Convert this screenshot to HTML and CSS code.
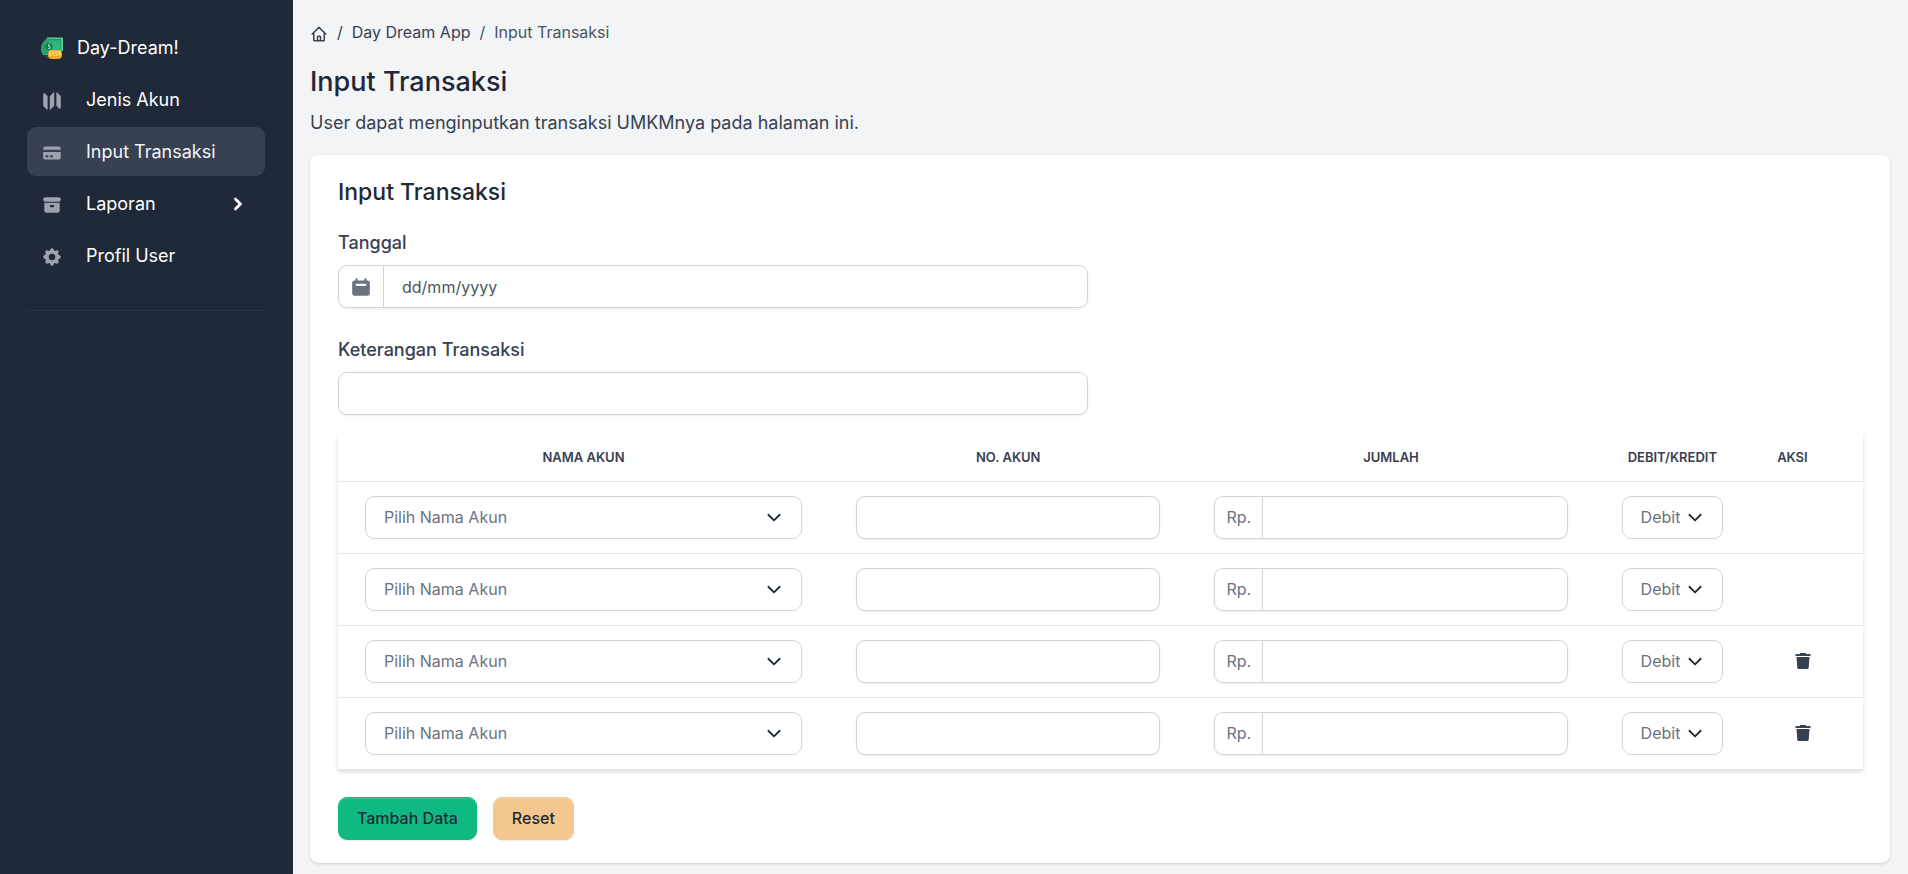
FILE: index.html
```html
<!DOCTYPE html>
<html lang="id">
<head>
<meta charset="utf-8">
<title>Input Transaksi</title>
<link rel="stylesheet" href="styles.css">
</head>
<body>
<svg class="sprite" aria-hidden="true">
  <symbol id="trash" viewBox="0 0 16 16"><path d="M5 0h6v1h4a.5.500 0 0 1 .5.500V3H.5V1.500A.5.500 0 0 1 1 1h4zM1.500 4h13l-.8 10.700a1.400 1.400 0 0 1-1.400 1.300H3.700a1.400 1.400 0 0 1-1.400-1.300z"/></symbol>
</svg>
<div class="layout">
  <nav class="sidebar" aria-label="Menu">
    <ul class="menu">
      <li><a class="brand" href="#">
        <svg class="logo" viewBox="0 0 22 22" aria-hidden="true">
          <circle cx="11" cy="11" r="11" fill="#40396e"/>
          <path d="M6 .5h16V14h-4V4H5z" fill="#4cc98f"/>
          <path d="M6 2h14v11h-2V4H5z" fill="#239a63"/>
          <path d="M4 3.500h15V18H2A11 11 0 0 1 4 3.500z" fill="#32b57a"/>
          <path d="M4 3.500A11 11 0 0 0 1.500 17H8V4z" fill="#25a068"/>
          <circle cx="8" cy="9.500" r="3.500" fill="#17784b"/>
          <path d="M9 7.500H7.500v2H9v2H7" fill="none" stroke="#8be3b6" stroke-width="1"/>
          <rect x="7" y="13" width="14" height="9" rx="4" fill="#f6a821"/>
          <rect x="8" y="14" width="12" height="5" rx="2" fill="#ffd66b"/>
          <path d="M10 15l2 4M13 15l2 4M16 15l2 4" stroke="#f09a1a" stroke-width="1"/>
        </svg>
        <span>Day-Dream!</span></a></li>
      <li><a class="item" href="#">
        <svg class="icon" viewBox="0 0 20 20" aria-hidden="true"><path d="M12 1.586l-4 4v12.828l4-4V1.586zM3.707 3.293A1 1 0 002 4v10a1 1 0 00.293.707L6 18.414V5.586L3.707 3.293zM17.707 5.293L14 1.586v12.828l2.293 2.293A1 1 0 0018 16V6a1 1 0 00-.293-.707z"/></svg>
        <span>Jenis Akun</span></a></li>
      <li><a class="item item-active" href="#" aria-current="page">
        <svg class="icon" viewBox="0 0 20 20" aria-hidden="true"><path fill-rule="evenodd" d="M4 4a2 2 0 00-2 2v1h16V6a2 2 0 00-2-2H4zM18 9H2v5a2 2 0 002 2h12a2 2 0 002-2V9zM4 13a1 1 0 011-1h1a1 1 0 110 2H5a1 1 0 01-1-1zm5-1a1 1 0 100 2h1a1 1 0 100-2H9z"/></svg>
        <span>Input Transaksi</span></a></li>
      <li><a class="item" href="#">
        <svg class="icon" viewBox="0 0 20 20" aria-hidden="true"><path d="M4 3a2 2 0 100 4h12a2 2 0 100-4H4z"/><path fill-rule="evenodd" d="M3 8h14v7a2 2 0 01-2 2H5a2 2 0 01-2-2V8zm5 3a1 1 0 011-1h2a1 1 0 110 2H9a1 1 0 01-1-1z"/></svg>
        <span>Laporan</span>
        <svg class="arrow" viewBox="0 0 20 20" aria-hidden="true"><path fill-rule="evenodd" d="M7.293 14.707a1 1 0 010-1.414L10.586 10 7.293 6.707a1 1 0 011.414-1.414l4 4a1 1 0 010 1.414l-4 4a1 1 0 01-1.414 0z"/></svg></a></li>
      <li><a class="item" href="#">
        <svg class="icon" viewBox="0 0 20 20" aria-hidden="true"><path fill-rule="evenodd" d="M11.490 3.170c-.38-1.560-2.600-1.560-2.980 0a1.532 1.532 0 01-2.286.948c-1.372-.836-2.942.734-2.106 2.106.540.886.061 2.042-.947 2.287-1.561.379-1.561 2.600 0 2.978a1.532 1.532 0 01.947 2.287c-.836 1.372.734 2.942 2.106 2.106a1.532 1.532 0 012.287.947c.379 1.561 2.600 1.561 2.978 0a1.533 1.533 0 012.287-.947c1.372.836 2.942-.734 2.106-2.106a1.533 1.533 0 01.947-2.287c1.561-.379 1.561-2.600 0-2.978a1.532 1.532 0 01-.947-2.287c.836-1.372-.734-2.942-2.106-2.106a1.532 1.532 0 01-2.287-.947zM10 13a3 3 0 100-6 3 3 0 000 6z"/></svg>
        <span>Profil User</span></a></li>
    </ul>
    <hr class="divider">
  </nav>

  <main class="content">
    <nav aria-label="breadcrumb">
      <ol class="crumbs">
        <li><a href="#" aria-label="Beranda"><svg class="home" viewBox="0 0 24 24" aria-hidden="true"><path d="M3 12l2-2m0 0l7-7 7 7M5 10v10a1 1 0 001 1h3m10-11l2 2m-2-2v10a1 1 0 01-1 1h-3m-6 0a1 1 0 001-1v-4a1 1 0 011-1h2a1 1 0 011 1v4a1 1 0 001 1m-6 0h6"/></svg></a></li>
        <li><a href="#">Day Dream App</a></li>
        <li class="current" aria-current="page">Input Transaksi</li>
      </ol>
    </nav>
    <h1 class="title">Input Transaksi</h1>
    <p class="lead">User dapat menginputkan transaksi UMKMnya pada halaman ini.</p>

    <form class="card">
      <h2 class="card-title">Input Transaksi</h2>
      <div class="field">
        <label for="tanggal">Tanggal</label>
        <div class="group">
          <span class="addon addon-date"><svg class="calendar" viewBox="0 0 20 20" aria-hidden="true"><path fill-rule="evenodd" d="M6 2a1 1 0 00-1 1v1H4a2 2 0 00-2 2v10a2 2 0 002 2h12a2 2 0 002-2V6a2 2 0 00-2-2h-1V3a1 1 0 10-2 0v1H7V3a1 1 0 00-1-1zm0 5a1 1 0 000 2h8a1 1 0 100-2H6z"/></svg></span>
          <input class="control" id="tanggal" type="text" placeholder="dd/mm/yyyy">
        </div>
      </div>
      <div class="field field-last">
        <label for="keterangan">Keterangan Transaksi</label>
        <input class="control" id="keterangan" type="text">
      </div>

      <table class="entries">
        <colgroup><col class="c-name"><col class="c-number"><col class="c-amount"><col class="c-side"><col class="c-action"></colgroup>
        <thead>
          <tr><th scope="col">Nama Akun</th><th scope="col">No. Akun</th><th scope="col">Jumlah</th><th scope="col">Debit/Kredit</th><th scope="col" class="action">Aksi</th></tr>
        </thead>
        <tbody>
          <tr>
            <td><select class="control select" aria-label="Nama akun 1"><option>Pilih Nama Akun</option></select></td>
            <td><input class="control" type="text" aria-label="No. akun 1"></td>
            <td><div class="group"><label class="addon" for="jumlah1">Rp.</label><input class="control" id="jumlah1" type="text"></div></td>
            <td><select class="control select" aria-label="Debit/kredit 1"><option>Debit</option><option>Kredit</option></select></td>
            <td></td>
          </tr>
          <tr>
            <td><select class="control select" aria-label="Nama akun 2"><option>Pilih Nama Akun</option></select></td>
            <td><input class="control" type="text" aria-label="No. akun 2"></td>
            <td><div class="group"><label class="addon" for="jumlah2">Rp.</label><input class="control" id="jumlah2" type="text"></div></td>
            <td><select class="control select" aria-label="Debit/kredit 2"><option>Debit</option><option>Kredit</option></select></td>
            <td></td>
          </tr>
          <tr>
            <td><select class="control select" aria-label="Nama akun 3"><option>Pilih Nama Akun</option></select></td>
            <td><input class="control" type="text" aria-label="No. akun 3"></td>
            <td><div class="group"><label class="addon" for="jumlah3">Rp.</label><input class="control" id="jumlah3" type="text"></div></td>
            <td><select class="control select" aria-label="Debit/kredit 3"><option>Debit</option><option>Kredit</option></select></td>
            <td><button class="remove" type="button" aria-label="Hapus baris 3"><svg aria-hidden="true"><use href="#trash"/></svg></button></td>
          </tr>
          <tr>
            <td><select class="control select" aria-label="Nama akun 4"><option>Pilih Nama Akun</option></select></td>
            <td><input class="control" type="text" aria-label="No. akun 4"></td>
            <td><div class="group"><label class="addon" for="jumlah4">Rp.</label><input class="control" id="jumlah4" type="text"></div></td>
            <td><select class="control select" aria-label="Debit/kredit 4"><option>Debit</option><option>Kredit</option></select></td>
            <td><button class="remove" type="button" aria-label="Hapus baris 4"><svg aria-hidden="true"><use href="#trash"/></svg></button></td>
          </tr>
        </tbody>
      </table>

      <div class="actions">
        <button class="btn btn-add" type="button">Tambah Data</button>
        <button class="btn btn-reset" type="reset">Reset</button>
      </div>
    </form>
  </main>
</div>
</body>
</html>
```

FILE: styles.css
```css
* {
  box-sizing: border-box;
}

body {
  margin: 0;
  background: #f2f4f6;
  color: #374151;
  font: 18px/27px Inter, "Liberation Sans", sans-serif;
}

a {
  color: inherit;
  text-decoration: none;
}

h1, h2, p, ul, ol {
  margin: 0;
  padding: 0;
}

ul, ol {
  list-style: none;
}

.sprite {
  display: none;
}

.layout {
  display: flex;
  min-height: 100vh;
}

/* Sidebar */
.sidebar {
  flex: 0 0 293px;
  padding: 23px 28px 0 27px;
  background: #1f2937;
  color: #fff;
}

.menu {
  display: flex;
  flex-direction: column;
  gap: 3px;
}

.brand,
.item {
  display: flex;
  align-items: center;
  height: 49px;
  padding: 0 15px 0 14px;
  border-radius: 9px;
}

.brand {
  gap: 14px;
}

.item {
  gap: 23px;
}

.item-active {
  background: #374151;
  color: #f2f4f6;
}

.logo {
  width: 22px;
  height: 22px;
}

.icon {
  width: 22px;
  height: 22px;
  margin-top: 2px;
  fill: #9ca3af;
}

.arrow {
  width: 24px;
  height: 24px;
  margin-left: auto;
  fill: #fff;
  stroke: #fff;
  stroke-width: 0.6;
}

.divider {
  margin: 30px 0 0;
  border: 0;
  border-top: 1px solid #2b3543;
}

/* Page header */
.content {
  flex: 1;
  min-width: 0;
  padding: 20px 18px 13px 17px;
}

.crumbs {
  display: flex;
  font-size: 16px;
  line-height: 24px;
}

.crumbs li + li::before {
  content: "/";
  padding: 0 9px;
}

.current {
  color: #4b5563;
}

.home {
  display: block;
  width: 18px;
  height: 18px;
  margin-top: 5px;
  fill: none;
  stroke: currentColor;
  stroke-width: 2;
  stroke-linecap: round;
  stroke-linejoin: round;
}

.title {
  margin-top: 20px;
  color: #1f2937;
  font-size: 27px;
  font-weight: 500;
  line-height: 36px;
}

.lead {
  margin: 9px 0 19px;
}

/* Form card */
.card {
  padding: 22px 27px 23px 28px;
  border-radius: 9px;
  background: #fff;
  box-shadow: 0 1px 3px rgba(17, 24, 39, 0.16);
}

.card-title {
  margin-bottom: 22px;
  color: #1f2937;
  font-size: 23px;
  font-weight: 500;
  line-height: 30px;
}

.field {
  width: calc(50% - 13px);
  margin-bottom: 28px;
}

.field label {
  display: block;
  margin-bottom: 9px;
  font-weight: 500;
}

.field-last {
  margin-bottom: 18px;
}

.control {
  display: block;
  width: 100%;
  height: 43px;
  padding: 0 18px;
  border: 1px solid #d1d5db;
  border-radius: 9px;
  background: #fff;
  box-shadow: 0 1px 2px rgba(17, 24, 39, 0.08);
  color: #6b7280;
  font: inherit;
  font-size: 16px;
}

.control::placeholder {
  color: #4b5563;
  opacity: 1;
}

.select {
  appearance: none;
  background: #fff url("data:image/svg+xml,%3Csvg xmlns='http://www.w3.org/2000/svg' viewBox='0 0 16 16'%3E%3Cpath fill='none' stroke='%231f2937' stroke-linecap='round' stroke-linejoin='round' stroke-width='1.6' d='M3 6l5 5 5-5'/%3E%3C/svg%3E") no-repeat right 18px center / 18px 18px;
  box-shadow: none;
}

.group {
  display: flex;
  border-radius: 9px;
  box-shadow: 0 1px 2px rgba(17, 24, 39, 0.08);
}

.group .control {
  flex: 1;
  min-width: 0;
  border-radius: 0 9px 9px 0;
  box-shadow: none;
}

.addon {
  display: flex;
  align-items: center;
  padding: 0 11px;
  border: 1px solid #d1d5db;
  border-right: 0;
  border-radius: 9px 0 0 9px;
  color: #6b7280;
  font-size: 16px;
}

.calendar {
  width: 22px;
  height: 22px;
  fill: #6b7280;
}

/* Entry table */
.entries {
  width: 100%;
  table-layout: fixed;
  border-collapse: collapse;
  box-shadow: 0 2px 4px rgba(17, 24, 39, 0.16);
}

.c-name { width: 32.2%; }
.c-number { width: 23.5%; }
.c-amount { width: 26.7%; }
.c-side { width: 10.2%; }
.c-action { width: 7.4%; }

.entries th {
  height: 48px;
  padding: 0;
  border-bottom: 1px solid #e5e7eb;
  font-size: 13px;
  font-weight: 600;
  line-height: 20px;
  text-transform: uppercase;
}

.entries .action {
  padding-left: 27px;
  text-align: left;
}

.entries td {
  height: 72px;
  padding: 0 27px;
  border-bottom: 1px solid #e5e7eb;
}

.remove {
  display: block;
  padding: 9px 18px;
  border: 0;
  background: none;
}

.remove svg {
  display: block;
  width: 16px;
  height: 16px;
  fill: #374151;
}

.actions {
  display: flex;
  gap: 16px;
  margin-top: 27px;
}

.btn {
  height: 43px;
  padding: 0 18px;
  border: 1px solid;
  border-radius: 9px;
  color: #1f2937;
  font: inherit;
  font-size: 16px;
  font-weight: 500;
  box-shadow: inset 0 1px 0 rgba(255, 255, 255, 0.15), 0 1px 1px rgba(17, 24, 39, 0.08);
}

.btn-add {
  border-color: #10b981;
  background: #10b981;
}

.btn-reset {
  border-color: #f3c78e;
  background: #f3c78e;
}
```
